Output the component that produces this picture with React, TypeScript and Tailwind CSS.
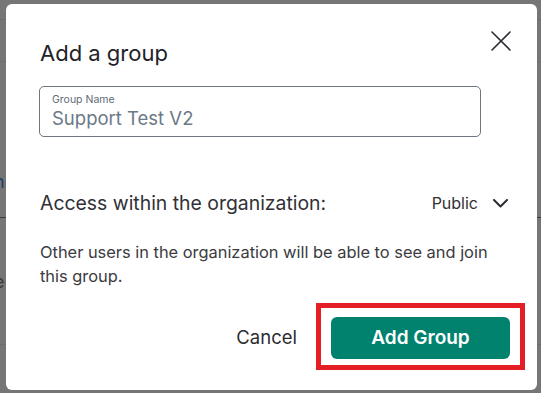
import { useState } from "react";

const font = { fontFamily: "Inter, 'Noto Sans', sans-serif" };

function CloseIcon() {
  return (
    <svg width="20" height="20" viewBox="0 0 20 20" fill="none" stroke="#2b2b33" strokeWidth="1.6" strokeLinecap="round">
      <path d="M1 1L19 19M19 1L1 19" />
    </svg>
  );
}

function Chevron() {
  return (
    <svg width="15" height="9" viewBox="0 0 15 9" fill="none" stroke="#2b2b33" strokeWidth="2" strokeLinecap="round" strokeLinejoin="round">
      <path d="M1 1L7.5 7.5L14 1" />
    </svg>
  );
}

export default function App() {
  const [name, setName] = useState("Support Test V2");

  return (
    <div className="relative w-[541px] h-[393px] overflow-hidden bg-[#767676]" style={font}>
      {/* page behind the backdrop */}
      <div className="flex flex-col">
        <div className="h-[20px] border-b border-[#6c6c6c]" />
        <div className="h-[42px] border-b border-[#6c6c6c]" />
        <div className="h-[156px] border-b border-[#3a3a3a] flex items-end pb-[22px] text-[18px] text-[#1f3f66]">
          <span className="-ml-[6px]">n</span>
        </div>
        <div className="h-[127px] border-b border-[#6c6c6c] flex items-center text-[18px] text-[#3a3a3a]">
          <span className="-ml-[6px]">e</span>
        </div>
      </div>

      {/* dialog */}
      <div className="absolute left-[6px] top-[4px] w-[531px] h-[386px] rounded-[6px] bg-white flex flex-col pl-[33px] pt-[35px]">
        <button className="absolute right-[25px] top-[26px] w-[22px] h-[22px] flex items-center justify-center" aria-label="Close">
          <CloseIcon />
        </button>

        <h2 className="text-[22px] leading-[28px] text-[#222228] pl-[1px]">Add a group</h2>

        <label className="mt-[19px] w-[442px] h-[51px] rounded-[5px] border border-[#6e7580] flex flex-col pl-[12px] pt-[7px]">
          <span className="text-[10.5px] leading-[12px] text-[#5f6b78]">Group Name</span>
          <input
            value={name}
            onChange={(e) => setName(e.target.value)}
            className="text-[18.5px] leading-[22px] h-[22px] mt-[1px] text-[#6b7887] outline-none bg-transparent w-[400px]"
            style={font}
          />
        </label>

        <div className="mt-[54px] flex items-center justify-between pr-[29px] pl-[1px]">
          <span className="text-[19.4px] leading-[24px] text-[#303036]">Access within the organization:</span>
          <button className="flex items-center gap-[15px] text-[16px] leading-[24px] text-[#303036]">
            Public
            <Chevron />
          </button>
        </div>

        <p className="mt-[25px] pl-[1px] w-[452px] text-[16.4px] leading-[24px] text-[#3a3a40]">
          Other users in the organization will be able to see and join this group.
        </p>

        <div className="mt-auto mb-[31px] flex items-center justify-end gap-[34px] pr-[27px]">
          <button className="text-[18.5px] text-[#2b2b30]">Cancel</button>
          <div className="relative">
            <button className="w-[179px] h-[42px] rounded-[6px] bg-[#01826f] text-white text-[19px] font-semibold">
              Add Group
            </button>
            <div className="absolute -left-[15px] -top-[14px] w-[209px] h-[67px] border-[5px] border-[#e31e24] pointer-events-none" />
          </div>
        </div>
      </div>
    </div>
  );
}
